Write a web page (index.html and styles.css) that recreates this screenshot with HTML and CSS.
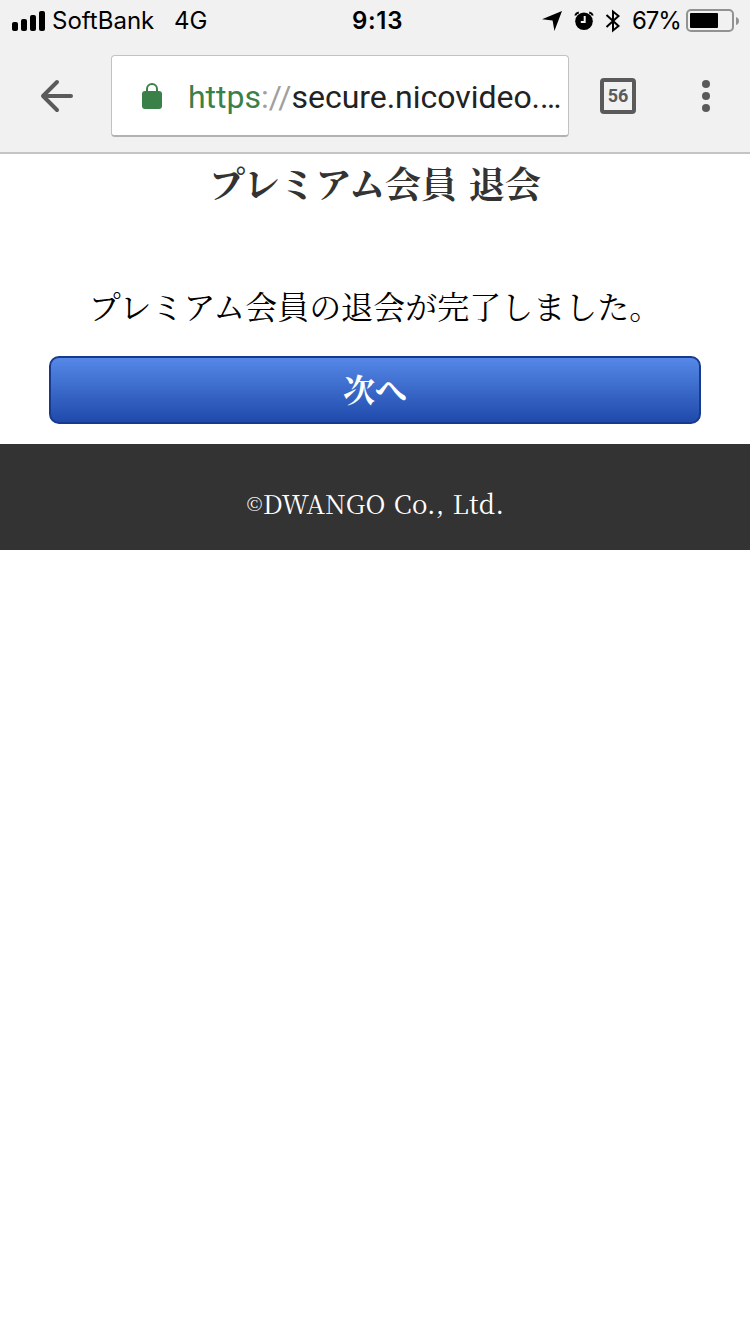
FILE: index.html
```html
<!DOCTYPE html>
<html lang="ja">
<head>
<meta charset="utf-8">
<title>プレミアム会員 退会</title>
<link rel="stylesheet" href="styles.css">
</head>
<body>
<header class="browser">
  <div class="status">
    <div class="status-left">
      <svg class="signal" width="33" height="20" viewBox="0 0 33 20"><rect y="11" width="6" height="9" rx="2"/><rect x="9" y="8" width="6" height="12" rx="2"/><rect x="18" y="4" width="6" height="16" rx="2"/><rect x="27" width="6" height="20" rx="2"/></svg>
      <span class="carrier">SoftBank</span>
      <span class="network">4G</span>
    </div>
    <span class="clock">9:13</span>
    <div class="status-right">
      <svg class="location" width="20" height="20" viewBox="0 0 20 20"><path d="M20 0 12.4 20 10.6 9.4 0 8.2Z"/></svg>
      <svg class="alarm" width="20" height="20" viewBox="0 0 20 20"><circle cx="10" cy="10.3" r="8.8"/><path class="bell" d="M1.2 4.5Q2 2.2 4.8 1.6M15.2 1.6Q18 2.2 18.8 4.5"/><path class="hands" d="M10.7 5v6H6.8"/></svg>
      <svg class="bluetooth" width="16" height="24" viewBox="0 0 16 24"><path d="m1.5 6 12 11L8 21.5v-19L13.5 7l-12 11"/></svg>
      <span class="percent">67%</span>
      <svg class="battery" width="53" height="24" viewBox="0 0 53 24"><rect class="case" x="1" y="1" width="46" height="21" rx="4"/><rect x="4" y="4" width="28" height="15" rx="1"/><path class="cap" d="M50 8q3 1 3 4t-3 4Z"/></svg>
    </div>
  </div>
  <nav class="toolbar">
    <svg class="back" width="34" height="34" viewBox="0 0 34 34"><path d="M31 17H3M17 3 3 17l14 14"/></svg>
    <div class="address">
      <svg class="lock" width="20" height="26" viewBox="0 0 20 26"><path d="M5 9V6a5 5 0 0 1 10 0v3"/><rect y="8" width="20" height="18" rx="3"/></svg>
      <span class="url"><span class="scheme">https</span><span class="slashes">://</span>secure.nicovideo.…</span>
    </div>
    <span class="tabs">56</span>
    <svg class="menu" width="8" height="32" viewBox="0 0 8 32"><circle cx="4" cy="4" r="4"/><circle cx="4" cy="16" r="4"/><circle cx="4" cy="28" r="4"/></svg>
  </nav>
</header>
<main>
  <h1 class="title">プレミアム会員 退会</h1>
  <p class="message">プレミアム会員の退会が完了しました。</p>
  <button class="next">次へ</button>
</main>
<footer class="footer"><span class="mark">©</span><span>DWANGO Co., Ltd.</span></footer>
</body>
</html>
```
FILE: styles.css
```css
* { box-sizing: border-box; }
body { margin: 0; background: #fff; font-family: "Noto Serif CJK JP", "Noto Serif JP", "Noto Sans CJK JP", serif; }
svg { display: block; flex: none; }
span { white-space: nowrap; }
.browser { height: 154px; background: #f1f1f1; border-bottom: 2px solid #c4c4c4; }
.status { display: grid; grid-template-columns: 1fr auto 1fr; height: 41px; padding: 0 11px 0 12px; align-items: center; font: 24px/40px Inter, sans-serif; color: #000; }
.status-left, .status-right { display: flex; align-items: center; }
.status-right { justify-content: flex-end; }
.carrier { width: 122px; margin-left: 7px; }
.clock { padding-left: 4px; font-weight: 600; letter-spacing: 0.7px; }
.alarm { margin-left: 12px; }
.alarm path { fill: none; }
.alarm .bell { stroke: #000; stroke-width: 2; }
.alarm .hands { stroke: #f1f1f1; stroke-width: 2; }
.bluetooth { margin-left: 11px; fill: none; stroke: #000; stroke-width: 2; }
.percent { width: 48px; margin: 0 6px 0 11px; letter-spacing: -1.1px; }
.case { fill: none; stroke: #929292; stroke-width: 2; }
.cap { fill: #929292; }
.toolbar { display: flex; align-items: center; height: 82px; margin-top: 14px; padding: 0 40px; }
.back { fill: none; stroke: #5a5a5a; stroke-width: 4; stroke-linecap: round; stroke-linejoin: round; }
.address { display: flex; align-items: center; flex: none; width: 458px; height: 82px; margin-left: 37px; padding-left: 30px; background: #fff; border: 1px solid #c2c2c2; border-bottom: 2px solid #b2b2b2; border-radius: 4px; }
.lock { fill: #3a8049; }
.lock path { fill: none; stroke: #3a8049; stroke-width: 2; }
.url { margin-left: 26px; padding-top: 2px; font: 32px/40px Roboto, sans-serif; letter-spacing: -0.03px; color: #222; }
.scheme { color: #3a8049; }
.slashes { color: #a0a0a0; }
.tabs { flex: none; width: 36px; height: 36px; margin-left: 31px; border: 4px solid #5a5a5a; border-radius: 4px; text-align: center; font: bold 18px/28px Roboto, sans-serif; color: #5a5a5a; }
.menu { margin-left: 66px; fill: #5a5a5a; }
main { display: flex; flex-direction: column; align-items: center; height: 290px; }
.title { margin: 2px 0 0; font-size: 36px; line-height: 54px; font-weight: bold; word-spacing: 3px; color: #333; white-space: nowrap; }
.message { margin: 71px 0 0; font-size: 32px; line-height: 48px; color: #000; white-space: nowrap; }
.next { width: 652px; height: 68px; margin-top: 27px; padding: 0 0 4px; border: 2px solid #173a8c; border-radius: 10px; background: linear-gradient(#5588e8, #1f4aab); color: #fff; font: bold 32px/48px "Noto Serif CJK JP", "Noto Serif JP", "Noto Sans CJK JP", serif; }
.footer { display: flex; justify-content: center; align-items: center; height: 106px; padding-top: 11px; background: #333; color: #fff; font-size: 26px; line-height: 40px; letter-spacing: 0.3px; word-spacing: 1px; }
.mark { padding-left: 1px; font-size: 19px; }
```
